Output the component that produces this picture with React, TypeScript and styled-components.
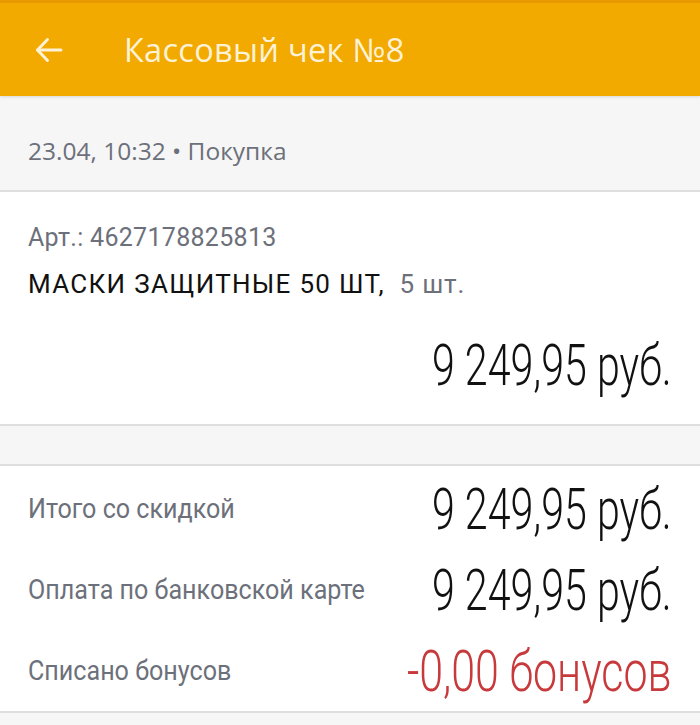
import styled, { createGlobalStyle } from 'styled-components'

const GlobalStyle = createGlobalStyle`
  html, body {
    margin: 0;
    padding: 0;
    background: #f6f6f6;
  }
  body {
    width: 700px;
    overflow: hidden;
  }
`

const Screen = styled.div`
  width: 700px;
  height: 725px;
  display: flex;
  flex-direction: column;
  background: #f6f6f6;
  overflow: hidden;
`

const Header = styled.header`
  height: 96px;
  flex-shrink: 0;
  display: flex;
  align-items: center;
  background: #f2a900;
  border-top: 3px solid #e69a00;
  box-sizing: border-box;
  box-shadow: 0 1px 3px rgba(0, 0, 0, 0.12);
`

const BackButton = styled.button`
  width: 124px;
  height: 100%;
  display: flex;
  align-items: center;
  padding: 0 0 0 35px;
  background: none;
  border: none;
  box-sizing: border-box;
`

const Title = styled.h1`
  margin: 0;
  font-family: 'Open Sans', sans-serif;
  font-weight: 400;
  font-size: 32.5px;
  color: #fdf2d6;
  letter-spacing: 0.3px;
`

const MetaBar = styled.div`
  height: 96px;
  flex-shrink: 0;
  display: flex;
  align-items: center;
  padding: 14px 28px 0;
  box-sizing: border-box;
  border-bottom: 2px solid #dedede;
  font-family: 'Open Sans', sans-serif;
  font-size: 24.5px;
  color: #6c707a;
`

const Section = styled.section<{ height: number }>`
  height: ${(p) => p.height}px;
  flex-shrink: 0;
  box-sizing: border-box;
  background: #ffffff;
  border-bottom: 2px solid #dedede;
`

const Gap = styled.div`
  height: 40px;
  flex-shrink: 0;
  box-sizing: border-box;
  border-bottom: 2px solid #dedede;
`

const ItemBlock = styled(Section)`
  display: flex;
  flex-direction: column;
  padding: 31px 28px 0;
`

const Condensed = styled.span<{ origin?: 'left' | 'right'; scale?: number }>`
  display: inline-block;
  flex-shrink: 0;
  white-space: nowrap;
  font-family: Roboto, sans-serif;
  transform: scaleX(${(p) => p.scale ?? 0.93});
  transform-origin: ${(p) => p.origin ?? 'left'} center;
`

const Article = styled(Condensed)`
  font-size: 25px;
  color: #6c707a;
  line-height: 30px;
  letter-spacing: 0.3px;
`

const ProductName = styled(Condensed)`
  margin-top: 16px;
  font-size: 26px;
  color: #111111;
  line-height: 30px;
  letter-spacing: 1.3px;
`

const Qty = styled.span`
  margin-left: 7px;
  color: #6c707a;
  letter-spacing: 0.8px;
`

const Amount = styled(Condensed)<{ negative?: boolean }>`
  font-size: 58px;
  font-weight: 300;
  line-height: 60px;
  color: ${(p) => (p.negative ? '#c8393b' : '#111111')};
`

const PriceRow = styled.div`
  display: flex;
  justify-content: flex-end;
  margin-top: 36px;
`

const TotalsBlock = styled(Section)`
  display: flex;
  flex-direction: column;
  padding: 2px 28px 0;
`

const TotalRow = styled.div`
  height: 81.5px;
  display: flex;
  align-items: center;
`

const Label = styled(Condensed)`
  flex: 1 1 0;
  min-width: 0;
  font-size: 27px;
  color: #6c707a;
`

const BackIcon = () => (
  <svg width="28" height="26" viewBox="0 0 28 26" fill="none" stroke="#fdf2d6" strokeWidth="3" strokeLinecap="round" strokeLinejoin="round">
    <path d="M26 13H2.5" />
    <path d="M12.5 2.5L2.5 13L12.5 23.5" />
  </svg>
)

const totals = [
  { label: 'Итого со скидкой', value: '9 249,95 руб.' },
  { label: 'Оплата по банковской карте', value: '9 249,95 руб.' },
  { label: 'Списано бонусов', value: '-0,00 бонусов', negative: true },
]

export default function App() {
  return (
    <Screen>
      <GlobalStyle />
      <Header>
        <BackButton aria-label="Назад">
          <BackIcon />
        </BackButton>
        <Title>Кассовый чек №8</Title>
      </Header>
      <MetaBar>23.04, 10:32 • Покупка</MetaBar>
      <ItemBlock height={234}>
        <div>
          <Article scale={1}>Арт.: 4627178825813</Article>
        </div>
        <div>
          <ProductName scale={1}>
            МАСКИ ЗАЩИТНЫЕ 50 ШТ, <Qty>5 шт.</Qty>
          </ProductName>
        </div>
        <PriceRow>
          <Amount origin="right" scale={0.71}>9 249,95 руб.</Amount>
        </PriceRow>
      </ItemBlock>
      <Gap />
      <TotalsBlock height={247}>
        {totals.map((t) => (
          <TotalRow key={t.label}>
            <Label>{t.label}</Label>
            <Amount origin="right" scale={t.negative ? 0.74 : 0.71} negative={t.negative}>
              {t.value}
            </Amount>
          </TotalRow>
        ))}
      </TotalsBlock>
    </Screen>
  )
}
